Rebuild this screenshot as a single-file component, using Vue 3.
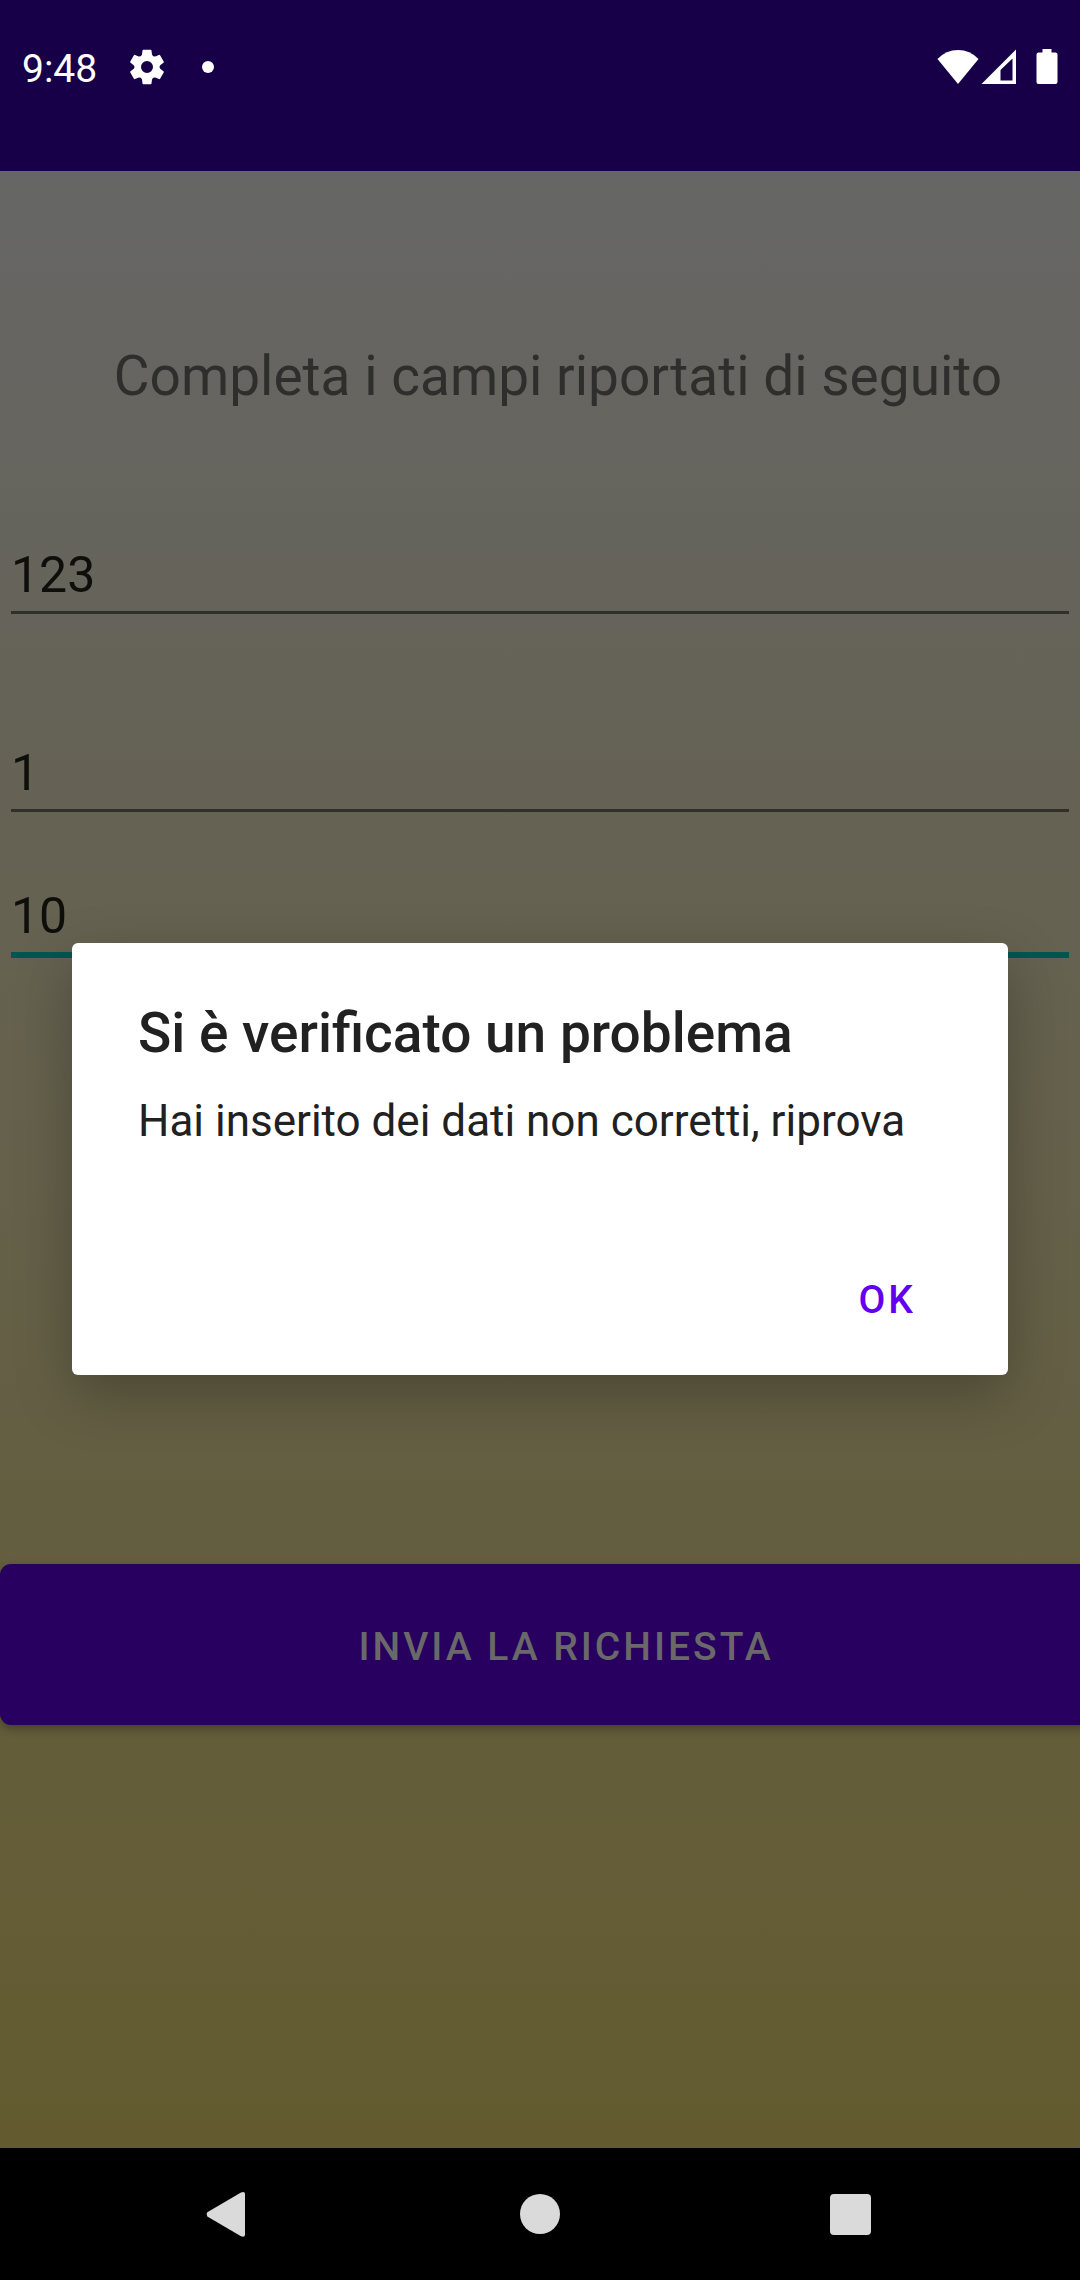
<script setup>
import { ref } from 'vue'

const amount = ref('123')
const quantity = ref('1')
const total = ref('10')
const teeth = [0, 60, 120, 180, 240, 300]
</script>

<template>
  <div class="screen">
    <header class="status-bar">
      <div class="status-left">
        <time class="clock">9:48</time>
        <svg class="gear" width="36" height="36" viewBox="-18 -18 36 36" aria-hidden="true">
          <circle r="9" fill="none" stroke="#fff" stroke-width="6" />
          <path
            v-for="angle in teeth"
            :key="angle"
            :transform="`rotate(${angle})`"
            d="M-3.6-17.2H3.6Q4.4-17.2 4.5-16.4L5-12.4L6.6-10H-6.6L-5-12.4L-4.5-16.4Q-4.4-17.2-3.6-17.2Z"
            fill="#fff"
          />
        </svg>
        <span class="dot"></span>
      </div>
      <div class="status-right">
        <svg width="42" height="36" viewBox="0 0 42 36" aria-hidden="true">
          <path d="M21 35L.5 10Q9 1 21 1T41.500 10Z" fill="#fff" />
        </svg>
        <svg class="signal" width="36" height="36" viewBox="0 0 36 36" aria-hidden="true">
          <path d="M.5 35L35 .5V35ZM19.500 21V31.500H31.500V9.500Z" fill="#fff" fill-rule="evenodd" />
        </svg>
        <svg class="battery" width="22" height="36" viewBox="0 0 22 36" aria-hidden="true">
          <path d="M6.500 0H15.500V3.500H19.500Q21.500 3.500 21.500 5.500V33Q21.500 35 19.500 35H2.500Q.5 35 .5 33V5.500Q.5 3.500 2.500 3.500H6.500Z" fill="#fff" />
        </svg>
      </div>
    </header>

    <main class="page">
      <form class="request-form" @submit.prevent>
        <h1 class="heading">Completa i campi riportati di seguito</h1>
        <input v-model="amount" class="field" type="text" aria-label="Primo campo" />
        <input v-model="quantity" class="field field-second" type="text" aria-label="Secondo campo" />
        <input v-model="total" class="field field-active" type="text" aria-label="Terzo campo" />
        <button class="submit" type="submit">INVIA LA RICHIESTA</button>
      </form>

      <div class="overlay">
        <section class="dialog" role="alertdialog" aria-labelledby="dialog-title" aria-describedby="dialog-text">
          <h2 id="dialog-title" class="dialog-title">Si è verificato un problema</h2>
          <p id="dialog-text" class="dialog-text">Hai inserito dei dati non corretti, riprova</p>
          <div class="dialog-actions">
            <button class="dialog-ok" type="button">OK</button>
          </div>
        </section>
      </div>
    </main>

    <nav class="nav-bar">
      <button class="nav-button" type="button" aria-label="Indietro">
        <svg width="48" height="48" viewBox="0 0 48 48">
          <path d="M2.300 22.300Q.6 24.500 2.300 26.500L36 46.300Q40 47.800 40 44.500V4Q40 .8 36 2.500Z" fill="#dadada" />
        </svg>
      </button>
      <button class="nav-button" type="button" aria-label="Home">
        <svg width="48" height="48" viewBox="0 0 48 48">
          <circle cx="24" cy="24" r="20" fill="#dadada" />
        </svg>
      </button>
      <button class="nav-button" type="button" aria-label="Recenti">
        <svg width="48" height="48" viewBox="0 0 48 48">
          <rect x="3" y="4" width="41" height="41" rx="4" fill="#dadada" />
        </svg>
      </button>
    </nav>
  </div>
</template>

<style>
body {
  margin: 0;
  background: #000;
}
</style>

<style scoped>
.screen {
  display: flex;
  flex-direction: column;
  min-height: 100vh;
  overflow: hidden;
  font-family: Roboto, "Liberation Sans", sans-serif;
}

button,
input {
  box-sizing: border-box;
  margin: 0;
  border: 0;
  border-radius: 0;
  outline: 0;
  font-family: inherit;
}

.status-bar {
  display: flex;
  justify-content: space-between;
  box-sizing: border-box;
  height: 171px;
  padding: 43px 22px 0;
  background: #170047;
  color: #fff;
}

.status-left,
.status-right {
  display: flex;
  align-items: center;
  height: 48px;
}

.clock {
  font-size: 39px;
  line-height: 48px;
  padding-top: 4px;
}

.gear {
  margin-left: 32px;
}

.dot {
  width: 12px;
  height: 12px;
  margin-left: 37px;
  border-radius: 50%;
  background: #fff;
}

.signal {
  margin-left: 2px;
}

.battery {
  margin-left: 19px;
}

.page {
  position: relative;
  flex: 1;
  background: linear-gradient(#666666, #635b2f);
}

.request-form {
  display: flex;
  flex-direction: column;
  padding-top: 173px;
}

.heading {
  margin: 0 0 137px 36px;
  color: #2e2e2c;
  font-size: 55px;
  font-weight: 400;
  line-height: 64px;
  text-align: center;
}

.field {
  height: 69px;
  margin: 0 11px;
  padding: 0 0 6px;
  border-bottom: 3px solid #302f29;
  background: transparent;
  color: #0e0e0b;
  font-size: 50px;
  line-height: 60px;
}

.field-second {
  margin-top: 129px;
}

.field-active {
  height: 72px;
  margin-top: 74px;
  border-bottom: 6px solid #015750;
}

.submit {
  height: 161px;
  margin: 606px -52px 0 0;
  padding: 4px 0 0;
  border-radius: 11px;
  background: #280060;
  box-shadow: 0 4px 10px rgba(0, 0, 0, 0.3);
  color: #696969;
  font-size: 39px;
  font-weight: 500;
  letter-spacing: 3px;
}

.overlay {
  position: absolute;
  inset: 0;
  display: flex;
  align-items: center;
  padding: 0 72px 2px;
}

.dialog {
  flex: 1;
  padding: 58px 48px 26px 66px;
  border-radius: 6px;
  background: #fff;
  box-shadow: 0 20px 56px rgba(0, 0, 0, 0.26);
  color: #212121;
}

.dialog-title {
  margin: 0;
  font-size: 55px;
  font-weight: 500;
  line-height: 64px;
}

.dialog-text {
  margin: 30px 0 103px;
  font-size: 44px;
  line-height: 52px;
}

.dialog-actions {
  display: flex;
  justify-content: flex-end;
}

.dialog-ok {
  height: 99px;
  padding: 2px 44px 0;
  background: transparent;
  color: #6200ee;
  font-size: 39px;
  font-weight: 500;
  letter-spacing: 3px;
}

.nav-bar {
  display: grid;
  grid-template-columns: repeat(3, 1fr);
  height: 132px;
  padding: 0 74px;
  background: #000;
}

.nav-button {
  display: flex;
  align-items: center;
  justify-content: center;
  padding: 0;
  background: transparent;
}
</style>
